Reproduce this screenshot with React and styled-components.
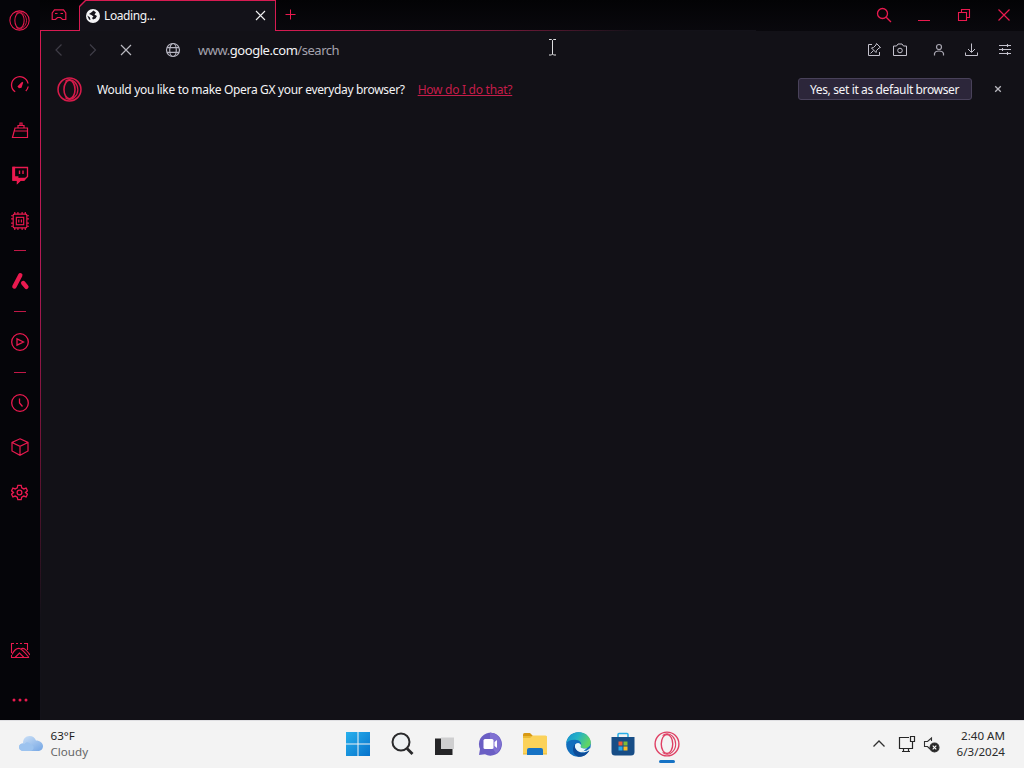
import React from 'react';
import styled, { createGlobalStyle } from 'styled-components';

const PINK = '#ea1a4f';

function OperaLogo({ size, width = 1.2, color = PINK }) {
    return (
        <Icon $size={size} viewBox="0 0 24 24" stroke={color} strokeWidth={width}>
            <circle cx="12" cy="12" r="11" />
            <ellipse cx="12" cy="12" rx="5.3" ry="8.8" />
            <path d="M8 4.2C10 2.2 14 1.6 17 4.8C21 9 21 15.5 17 19.2C14 22.4 10 21.8 8 19.8" strokeWidth={width * 0.8} />
        </Icon>
    );
}

function Sidebar() {
    return (
        <SideBar>
            <SideItem $h={40}><OperaLogo size={21} /></SideItem>
            <SideGap />
            <SideItem $h={45}>
                <Icon $size={20} viewBox="0 0 20 20" stroke={PINK} strokeWidth="1.3">
                    <path d="M5.2 16.8A8.3 8.3 0 1 1 18 8.5M18.2 11.5A8.3 8.3 0 0 1 15.8 16" />
                    <path d="M8.3 11.5L12.6 7.2L11 12.2L9.2 12.6Z" fill={PINK} />
                </Icon>
            </SideItem>
            <SideItem $h={45}>
                <Icon $size={20} viewBox="0 0 20 20" stroke={PINK} strokeWidth="1.2">
                    <path d="M5 8H17.5V17.5H2.5Z M4.3 11H17.5M8 8V5.5H14V8M10 5.5V3H12V5.5" />
                </Icon>
            </SideItem>
            <SideItem $h={45}>
                <Icon $size={20} viewBox="0 0 20 20" stroke={PINK} strokeWidth="1.3">
                    <path d="M3 2.5H17.5V11.5L14 15H10.5L7.5 18V15H3Z" />
                    <path d="M3 2.5H4.5V12H7.8L8 14L10 13.5H15L14 15H10.5L7.5 18V15H3Z" fill={PINK} />
                    <path d="M9.5 5.5V9M13 5.5V9" strokeWidth="1.4" />
                </Icon>
            </SideItem>
            <SideItem $h={47}>
                <Icon $size={21} viewBox="0 0 20 20" stroke={PINK} strokeWidth="1.1">
                    <rect x="4" y="4" width="13" height="13" rx="1" />
                    <rect x="7" y="7" width="7" height="7" />
                    <path d="M9.3 9V12M11.8 9V12M5.5 2V4M8.5 2V4M12.5 2V4M15.5 2V4M5.5 17V19M8.5 17V19M12.5 17V19M15.5 17V19M2 5.5H4M2 8.5H4M2 12.5H4M2 15.5H4M17 5.5H19M17 8.5H19M17 12.5H19M17 15.5H19" />
                </Icon>
            </SideItem>
            <SideDash $top={6} />
            <SideItem $h={45}>
                <Icon $size={20} viewBox="0 0 20 20" stroke={PINK} strokeWidth="4.4" strokeLinecap="round">
                    <path d="M10.3 4.2L4.4 15.5" />
                    <path d="M13.2 12L16.4 15.8" />
                </Icon>
            </SideItem>
            <SideDash />
            <SideItem $h={45}>
                <Icon $size={20} viewBox="0 0 20 20" stroke={PINK} strokeWidth="1.3">
                    <circle cx="10" cy="10" r="8.3" />
                    <path d="M7 6.8L13.5 10L7 13.2Z" />
                </Icon>
            </SideItem>
            <SideDash />
            <SideItem $h={45}>
                <Icon $size={20} viewBox="0 0 20 20" stroke={PINK} strokeWidth="1.3">
                    <circle cx="10" cy="10" r="8.3" />
                    <path d="M9.5 5.5V10L12.5 13.5" />
                </Icon>
            </SideItem>
            <SideItem $h={44}>
                <Icon $size={20} viewBox="0 0 20 20" stroke={PINK} strokeWidth="1.2">
                    <path d="M10 1.8L18 5.5V14L10 18.2L2 14V5.5ZM2 5.5L10 9.3L18 5.5M10 9.3V18" />
                </Icon>
            </SideItem>
            <SideItem $h={47}>
                <Icon $size={17} viewBox="0 0 20 20" stroke={PINK} strokeWidth="1.5">
                    <path d="M8 1.5H12L12.6 4.5L15 5.8L17.8 4.8L19.3 8L17 10L19.3 12L17.8 15.2L15 14.2L12.6 15.5L12 18.5H8L7.4 15.5L5 14.2L2.2 15.2L.7 12L3 10L.7 8L2.2 4.8L5 5.8L7.4 4.5Z" />
                    <circle cx="10" cy="10" r="2.8" />
                </Icon>
            </SideItem>
            <SideSpacer />
            <SideItem $h={58}>
                <Icon $size={20} viewBox="0 0 20 20" stroke={PINK} strokeWidth="1.1">
                    <path d="M1.5 12V2.5H4M6 2.5H8M10 2.5H12M14 2.5H17.5V9M1.5 14V16.5H19" />
                    <path d="M2 13.5C4 9.5 7 7 9.5 7.5C12 8 15 11.5 19 16.5M5 16.5L9.5 12L14 16.5M11 8C14 6 17 9.5 20 14" />
                </Icon>
            </SideItem>
            <SideItem $h={40}>
                <Icon $size={18} viewBox="0 0 18 18" fill={PINK}>
                    <circle cx="3" cy="9" r="1.5" />
                    <circle cx="9" cy="9" r="1.5" />
                    <circle cx="15" cy="9" r="1.5" />
                </Icon>
            </SideItem>
        </SideBar>
    );
}

function TabStrip() {
    return (
        <Strip>
            <GxCorner>
                <Icon $size={16} viewBox="0 0 16 16" stroke={PINK} strokeWidth="1.2">
                    <path d="M3.5 2.8H12.5L14.8 6V12.5H11.5L9.5 10.5H6.5L4.5 12.5H1.2V6ZM4 6.5H6.5M9.5 6.5H12" />
                </Icon>
            </GxCorner>
            <Tab>
                <Icon $size={14} viewBox="0 0 14 14">
                    <circle cx="7" cy="7" r="7" fill="#f4f4f6" />
                    <path d="M7.5 1.5L5.5 3.2L3 5L5.5 6L7.5 7.5L6 9L7 10.5L9.5 9.5L11 7L8.5 5.5L10 3.5Z" fill="#15141b" />
                    <path d="M1.3 6.5L3.8 8.3L4.5 11L3 10.5Z" fill="#15141b" />
                </Icon>
                <TabTitle>Loading...</TabTitle>
                <Icon $size={11} viewBox="0 0 11 11" stroke="#f0f0f2" strokeWidth="1.1">
                    <path d="M1 1L10 10M10 1L1 10" />
                </Icon>
            </Tab>
            <StripRest>
                <Icon $size={11} viewBox="0 0 11 11" stroke={PINK}>
                    <path d="M5.5 .5V10.5M.5 5.5H10.5" />
                </Icon>
                <WindowButtons>
                    <Icon $size={16} viewBox="0 0 16 16" stroke={PINK} strokeWidth="1.3">
                        <circle cx="6.5" cy="6.5" r="5" />
                        <path d="M10.2 10.2L15 15" />
                    </Icon>
                    <Icon $size={16} viewBox="0 0 16 16" stroke={PINK}>
                        <path d="M2 13.5H14" />
                    </Icon>
                    <Icon $size={16} viewBox="0 0 16 16" stroke={PINK} strokeWidth="1.1">
                        <path d="M2.5 5.5H10.5V13.5H2.5ZM5.5 5V2.5H13.5V10.5H11" />
                    </Icon>
                    <Icon $size={16} viewBox="0 0 16 16" stroke={PINK} strokeWidth="1.2">
                        <path d="M2.5 2.5L13.5 13.5M13.5 2.5L2.5 13.5" />
                    </Icon>
                </WindowButtons>
            </StripRest>
        </Strip>
    );
}

function AddressBar() {
    return (
        <Toolbar>
            <NavButtons>
                <Icon $size={14} viewBox="0 0 14 14" stroke="#3f3d47" strokeWidth="1.2"><path d="M9.5 1.5L4 7L9.5 12.5" /></Icon>
                <Icon $size={14} viewBox="0 0 14 14" stroke="#3f3d47" strokeWidth="1.2"><path d="M4 1.5L9.5 7L4 12.5" /></Icon>
                <Icon $size={14} viewBox="0 0 14 14" stroke="#b9b8c0" strokeWidth="1.2"><path d="M2 2L12 12M12 2L2 12" /></Icon>
            </NavButtons>
            <Icon $size={16} viewBox="0 0 16 16" stroke="#b5b4c0" strokeWidth="1.2">
                <circle cx="8" cy="8" r="6.5" />
                <ellipse cx="8" cy="8" rx="3.3" ry="6.5" />
                <path d="M2 5.7H14M2 10.3H14" />
            </Icon>
            <Url>www.<b>google.com</b>/search</Url>
            <ToolButtons>
                <Icon $size={16} viewBox="0 0 16 16" stroke="#c3c1cc">
                    <path d="M6 2.5H2.5V13.5H13.5V10M10.5 1.5L14.5 5.5L13 6L10.5 8.5L10 10.5L5.5 6L7.5 5.5L10 3ZM7.5 8.5L4.5 11.5" />
                </Icon>
                <Icon $size={16} $left={10} viewBox="0 0 16 16" stroke="#c3c1cc">
                    <path d="M1.5 4H4.5L6 2H10L11.5 4H14.5V13.5H1.5Z" />
                    <circle cx="8" cy="8.5" r="2.3" />
                </Icon>
                <Icon $size={16} $left={23} viewBox="0 0 16 16" stroke="#a9a7b2" strokeWidth="1.2">
                    <circle cx="8" cy="5" r="2.5" />
                    <path d="M3.5 13.5V11.5C4 9.5 6 9 8 9S12 9.5 12.5 11.5V13.5" />
                </Icon>
                <Icon $size={16} $left={16} viewBox="0 0 16 16" stroke="#c3c1cc">
                    <path d="M8.5 1.5V10M5 7L8.5 10.5L12 7M2.5 10.5V13.5H14.5V10.5" />
                </Icon>
                <Icon $size={16} $left={18} viewBox="0 0 16 16" stroke="#c3c1cc" strokeWidth="1.1">
                    <path d="M2 3.5H14M2 7.5H14M2 11.5H14M10.5 2V5M5.5 6V9M10.5 10V13" />
                </Icon>
            </ToolButtons>
        </Toolbar>
    );
}

function Banner() {
    return (
        <BannerRow>
            <OperaLogo size={25} width={1.5} color="#d81b4b" />
            <Question>Would you like to make Opera GX your everyday browser?</Question>
            <HelpLink href="#">How do I do that?</HelpLink>
            <DefaultButton>Yes, set it as default browser</DefaultButton>
            <Icon $size={8} viewBox="0 0 8 8" stroke="#b9b8bf" strokeWidth="1.3"><path d="M1.2 1.2L6.8 6.8M6.8 1.2L1.2 6.8" /></Icon>
        </BannerRow>
    );
}

function Taskbar() {
    return (
        <Bar>
            <Weather>
                <Icon $size={26} viewBox="0 0 26 26">
                    <defs>
                        <linearGradient id="cloud" x1="0" y1="0" x2="1" y2="1">
                            <stop offset="0" stopColor="#d3e5f8" />
                            <stop offset="1" stopColor="#73a5e4" />
                        </linearGradient>
                    </defs>
                    <path d="M6 20C2.5 20 1 18 1 16S2.8 12.5 5 12.3C5 8 7.5 5 11.5 5C15 5 17 7 18 9.5C22 9.5 25 12 25 15S23 20 19.5 20Z" fill="url(#cloud)" />
                    <path d="M1 16C1 13 4 11.5 6.5 13C8 10.5 12 10.8 13 14C15 14 16 15.5 15.5 17.5C15 19 14 20 12 20H6C2.5 20 1 18 1 16Z" fill="#9cc3ef" />
                </Icon>
                <WeatherText>
                    <TempText>63°F</TempText>
                    <SkyText>Cloudy</SkyText>
                </WeatherText>
            </Weather>
            <Apps>
                <TaskButton>
                    <Icon $size={24} viewBox="0 0 24 24">
                        <defs>
                            <linearGradient id="win" x1="0" y1="0" x2="1" y2="1">
                                <stop offset="0" stopColor="#28b1ed" />
                                <stop offset="1" stopColor="#0672cb" />
                            </linearGradient>
                        </defs>
                        <path d="M0 0H11.5V11.5H0ZM12.5 0H24V11.5H12.5ZM0 12.5H11.5V24H0ZM12.5 12.5H24V24H12.5Z" fill="url(#win)" />
                    </Icon>
                </TaskButton>
                <TaskButton>
                    <Icon $size={24} viewBox="0 0 24 24" stroke="#29292b" strokeWidth="2">
                        <circle cx="11" cy="10" r="8.5" fill="#eef1f3" />
                        <path d="M17 16.5L22.5 22" strokeWidth="2.8" />
                    </Icon>
                </TaskButton>
                <TaskButton>
                    <Icon $size={24} viewBox="0 0 24 24">
                        <path d="M1 6.5H18.5V23H1Z" fill="#252527" />
                        <path d="M7 5.5H20V17H7Z" fill="#cfcfd0" />
                    </Icon>
                </TaskButton>
                <TaskButton>
                    <Icon $size={24} viewBox="0 0 24 24">
                        <path d="M1 23L2 17A11.5 11.5 0 1 1 7 22.3Z" fill="#6b5fc4" />
                        <path d="M12 .5A11.5 11.5 0 0 1 18 21.5L12 12Z" fill="#8071d2" />
                        <rect x="5.5" y="7" width="10" height="10" rx="1.5" fill="#fff" />
                        <path d="M16.5 10L19 8V16L16.5 14Z" fill="#fff" />
                    </Icon>
                </TaskButton>
                <TaskButton>
                    <Icon $size={26} viewBox="0 0 26 26">
                        <path d="M1 3.5Q1 2 2.5 2H8L11 5H1Z" fill="#d89914" />
                        <path d="M1 5H23.5Q25 5 25 6.5V23.5H1Z" fill="#eab932" />
                        <path d="M1 7H8L11 4.5H23.5Q25 4.5 25 6V22.5H1Z" fill="#fbd25a" />
                        <path d="M5 24V19Q5 17 7 17H19Q21 17 21 19V24Z" fill="#1672c4" />
                    </Icon>
                </TaskButton>
                <TaskButton>
                    <Icon $size={25} viewBox="0 0 24 24">
                        <defs>
                            <linearGradient id="edge" x1="0" y1="0" x2="1" y2=".4">
                                <stop offset="0" stopColor="#168fd1" />
                                <stop offset=".5" stopColor="#25b3c5" />
                                <stop offset="1" stopColor="#60d465" />
                            </linearGradient>
                        </defs>
                        <circle cx="12" cy="12" r="11.8" fill="#126ebd" />
                        <path d="M.2 11C1 4 6 .2 12 .2C19 .2 23.8 5 23.8 10C23.8 14 20 16 16 15.5C14 15.3 13.5 14.5 14.3 13.5C16 10 12 7 8 7.5C4 7.5 1.5 9 .2 11Z" fill="url(#edge)" />
                        <path d="M9.5 11C8 15 11 20 16 20C18.5 20 20.5 19 22.5 17.5C20 22.5 15.5 24 12 23.8C6 22 5 14 9.5 11Z" fill="#0d4b97" />
                        <path d="M10 11C8.5 15.5 13 19.3 18 18.3C20.5 17.8 22 16.5 23.5 15L24 20L22.3 17.5C19 20 13 20.5 10 17C8 14.7 8.3 12 10 11Z" fill="#f3f3f3" />
                        <path d="M9 12.5C9.5 10.5 12 10 13.7 11.5C15 12.8 14 14 14 14.5C14.5 16 18 16.5 20.5 15L17 18.3C12 19.5 8.5 16 9 12.5Z" fill="#e9f6fa" />
                    </Icon>
                </TaskButton>
                <TaskButton>
                    <Icon $size={24} viewBox="0 0 24 24">
                        <path d="M7 6V2.5Q7 1.5 8 1.5H16Q17 1.5 17 2.5V6" fill="none" stroke="#28aee8" strokeWidth="1.5" />
                        <path d="M.5 5H23.5V20Q23.5 23.5 20 23.5H4Q.5 23.5 .5 20Z" fill="#174d86" />
                        <path d="M7.5 9.5H11.5V13.5H7.5Z" fill="#f15a35" />
                        <path d="M12.5 9.5H16.5V13.5H12.5Z" fill="#7fbb35" />
                        <path d="M7.5 14.5H11.5V18.5H7.5Z" fill="#28a9e8" />
                        <path d="M12.5 14.5H16.5V18.5H12.5Z" fill="#fbbc21" />
                    </Icon>
                </TaskButton>
                <TaskButton $active>
                    <OperaLogo size={26} width={1.3} color="#df3f63" />
                </TaskButton>
            </Apps>
            <Tray>
                <Icon $size={14} viewBox="0 0 14 14" stroke="#303030" strokeWidth="1.3"><path d="M1.5 9.5L7 4L12.5 9.5" /></Icon>
                <Icon $size={18} $left={12} viewBox="0 0 18 18" stroke="#262626" strokeWidth="1.2">
                    <path d="M11 2.5H1.5V13.5H14.5V8M5.5 13.5V16.5M10.5 13.5V16.5M4 16.5H12M12.5 1.5H16.5V6.5H12.5ZM14.5 6.5V9" />
                </Icon>
                <Icon $size={17} $left={7} viewBox="0 0 17 17" stroke="#303030" strokeWidth="1.1">
                    <path d="M8.5 5V2L4.5 5.5H1.5V10.5H4.5L7 13" />
                    <circle cx="11.5" cy="11.5" r="4.5" fill="#262626" />
                    <path d="M9.7 9.7L13.3 13.3M13.3 9.7L9.7 13.3" stroke="#fff" />
                </Icon>
                <Clock>
                    <span>2:40 AM</span>
                    <span>6/3/2024</span>
                </Clock>
            </Tray>
        </Bar>
    );
}

function App() {
    return (
        <Screen>
            <GlobalStyle />
            <Browser>
                <Sidebar />
                <Main>
                    <TabStrip />
                    <Body>
                        <AddressBar />
                        <Banner />
                    </Body>
                </Main>
            </Browser>
            <Taskbar />
            <Cursor viewBox="0 0 9 17">
                <path d="M1 .5H3.5L4.5 1.5L5.5 .5H8M4.5 1.5V15M1 16H3.5L4.5 15L5.5 16H8" />
            </Cursor>
        </Screen>
    );
}

const GlobalStyle = createGlobalStyle`
    * {
        box-sizing: border-box;
    }

    body {
        margin: 0;
        overflow: hidden;
        font-family: 'Noto Sans', sans-serif;
    }
`;

const Screen = styled.div`
    position: relative;
    display: flex;
    flex-direction: column;
    width: 1024px;
    height: 768px;
`;

const Icon = styled.svg.attrs((p) => ({ fill: p.fill || 'none' }))`
    display: block;
    flex: none;
    width: ${(p) => p.$size}px;
    height: ${(p) => p.$size}px;
    margin-left: ${(p) => p.$left || 0}px;
`;

const Browser = styled.div`
    display: flex;
    height: 720px;
    background: #050508;
`;

const SideBar = styled.nav`
    display: flex;
    flex-direction: column;
    width: 40px;
    background: #050509;
`;

const SideItem = styled.div`
    display: flex;
    align-items: center;
    justify-content: center;
    height: ${(p) => p.$h}px;
    padding-right: 1px;
`;

const SideGap = styled.div`
    height: 22px;
`;

const SideDash = styled.div`
    width: 12px;
    height: 1px;
    margin: ${(p) => p.$top || 8}px auto 7px;
    background: #c21847;
`;

const SideSpacer = styled.div`
    flex: 1;
`;

const Main = styled.main`
    flex: 1;
    display: flex;
    flex-direction: column;
`;

const Strip = styled.div`
    display: flex;
    height: 31px;
    background: linear-gradient(#030305, #09080d);
`;

const GxCorner = styled.div`
    display: flex;
    align-items: center;
    justify-content: center;
    width: 39px;
    padding-right: 1px;
    border-bottom: 1px solid #d71b52;
`;

/* pink shape with a cut corner, the ::before fills everything but a 1px rim */
const Tab = styled.div`
    position: relative;
    display: flex;
    align-items: center;
    width: 197px;
    padding: 0 10px 0 7px;
    background: #d71b52;
    clip-path: polygon(6px 0, 100% 0, 100% 100%, 0 100%, 0 6px);

    &::before {
        content: '';
        position: absolute;
        inset: 1px 1px 0;
        background: #131219;
        clip-path: polygon(6px 0, 100% 0, 100% 100%, 0 100%, 0 6px);
    }

    > * {
        position: relative;
    }
`;

const TabTitle = styled.span`
    flex: 1;
    margin-left: 4px;
    font-size: 12px;
    letter-spacing: -0.4px;
    color: #f3f3f5;
`;

const StripRest = styled.div`
    flex: 1;
    display: flex;
    align-items: center;
    justify-content: space-between;
    padding: 0 12px 3px 9px;
    background: linear-gradient(90deg, #d71b52, #7d1a3c 45%, #131219 75%) left bottom / 480px 1px no-repeat;
`;

const WindowButtons = styled.div`
    display: flex;
    gap: 24px;
    padding-top: 2px;
`;

const Body = styled.section`
    flex: 1;
    border-left: 1px solid;
    border-image: linear-gradient(#d71b52, #b01a55 35%, #701437 60%, #131219 85%) 1;
    background: #121117;
`;

const Toolbar = styled.div`
    display: flex;
    align-items: center;
    height: 38px;
    padding: 0 11px;
`;

const NavButtons = styled.div`
    display: flex;
    gap: 19.5px;
    margin-right: 32px;
`;

const Url = styled.span`
    flex: 1;
    margin-left: 17px;
    font-size: 13px;
    letter-spacing: -0.46px;
    color: #a4a2ae;

    b {
        font-weight: 400;
        color: #f4f4f6;
    }
`;

const ToolButtons = styled.div`
    display: flex;
    align-items: center;
`;

const BannerRow = styled.div`
    display: flex;
    align-items: center;
    height: 41px;
    padding: 0 22px 1px 15.5px;
    font-size: 12px;
`;

const Question = styled.span`
    margin-left: 15.5px;
    letter-spacing: -0.33px;
    white-space: nowrap;
    color: #f4f4f6;
`;

const HelpLink = styled.a`
    margin-left: 13px;
    letter-spacing: -0.27px;
    color: #c51d4a;
`;

const DefaultButton = styled.button`
    width: 174px;
    height: 22px;
    margin: 0 22px 0 auto;
    padding: 0 1px 0 0;
    border: 1px solid #49425a;
    border-radius: 3px;
    background: #2c263a;
    font: 12px 'Noto Sans', sans-serif;
    letter-spacing: -0.37px;
    white-space: nowrap;
    color: #f6f5f8;
`;

const Bar = styled.footer`
    display: flex;
    justify-content: space-between;
    height: 48px;
    padding-bottom: 1px;
    border-top: 1px solid #dfdfe2;
    background: #f3f3f3;
`;

const Weather = styled.div`
    display: flex;
    align-items: center;
    width: 336px;
    padding-left: 18px;
`;

const WeatherText = styled.div`
    display: flex;
    flex-direction: column;
    margin-left: 6.5px;
    font-size: 11.6px;
    line-height: 16px;
`;

const TempText = styled.span`
    color: #1d1d1d;
`;

const SkyText = styled.span`
    color: #666;
`;

const Apps = styled.div`
    display: flex;
`;

const TaskButton = styled.div`
    position: relative;
    display: flex;
    align-items: center;
    justify-content: center;
    width: 44.1px;

    &::after {
        content: '';
        display: ${(p) => (p.$active ? 'block' : 'none')};
        position: absolute;
        bottom: 4px;
        left: 14px;
        width: 16px;
        height: 3px;
        border-radius: 2px;
        background: #1673c5;
    }
`;

const Tray = styled.div`
    display: flex;
    align-items: center;
    justify-content: flex-end;
    width: 335px;
    padding-right: 19px;
`;

const Clock = styled.div`
    display: flex;
    flex-direction: column;
    align-items: flex-end;
    width: 65px;
    font-size: 11.6px;
    line-height: 16px;
    color: #2b2b2b;
`;

const Cursor = styled.svg`
    position: absolute;
    left: 548px;
    top: 39px;
    width: 9px;
    height: 17px;
    fill: none;
    stroke: #dedee0;
`;

export default App;
